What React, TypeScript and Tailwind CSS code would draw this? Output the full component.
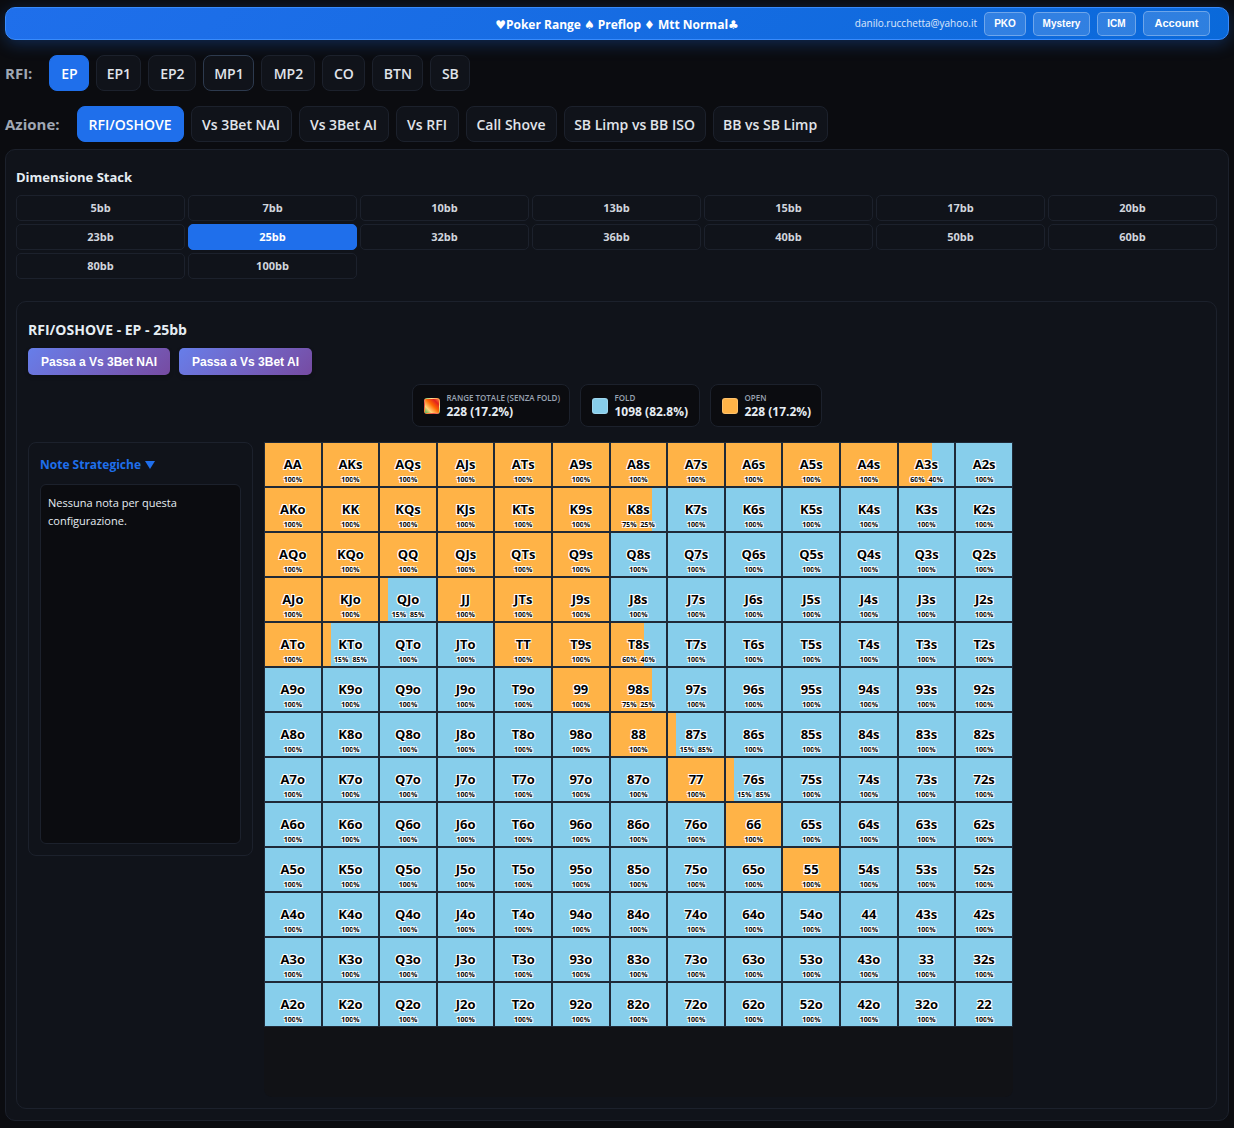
import React from "react";
import clsx from "clsx";

const RANKS = ["A", "K", "Q", "J", "T", "9", "8", "7", "6", "5", "4", "3", "2"];

const OPEN_COLOR = "#ffb347";
const FOLD_COLOR = "#87ceeb";

// open frequency for each hand, everything missing is a pure fold
const OPEN: Record<string, number> = {
  AA: 100, AKs: 100, AQs: 100, AJs: 100, ATs: 100, A9s: 100, A8s: 100,
  A7s: 100, A6s: 100, A5s: 100, A4s: 100, A3s: 60,
  AKo: 100, KK: 100, KQs: 100, KJs: 100, KTs: 100, K9s: 100, K8s: 75,
  AQo: 100, KQo: 100, QQ: 100, QJs: 100, QTs: 100, Q9s: 100,
  AJo: 100, KJo: 100, QJo: 15, JJ: 100, JTs: 100, J9s: 100,
  ATo: 100, KTo: 15, TT: 100, T9s: 100, T8s: 60,
  "99": 100, "98s": 75,
  "88": 100, "87s": 15,
  "77": 100, "76s": 15,
  "66": 100,
  "55": 100,
};

const modes = [
  { label: "PKO", width: "w-[42px]" },
  { label: "Mystery", width: "w-[57px]" },
  { label: "ICM", width: "w-[39px]" },
];

const positions = [
  { label: "EP", width: "w-[40px]" },
  { label: "EP1", width: "w-[45px]" },
  { label: "EP2", width: "w-[48px]" },
  { label: "MP1", width: "w-[51px]" },
  { label: "MP2", width: "w-[54px]" },
  { label: "CO", width: "w-[43px]" },
  { label: "BTN", width: "w-[51px]" },
  { label: "SB", width: "w-[40px]" },
];

const actions = [
  { label: "RFI/OSHOVE", width: "w-[107px]" },
  { label: "Vs 3Bet NAI", width: "w-[101px]" },
  { label: "Vs 3Bet AI", width: "w-[90px]" },
  { label: "Vs RFI", width: "w-[63px]" },
  { label: "Call Shove", width: "w-[91px]" },
  { label: "SB Limp vs BB ISO", width: "w-[142px]" },
  { label: "BB vs SB Limp", width: "w-[115px]" },
];

const stacks = [
  "5bb", "7bb", "10bb", "13bb", "15bb", "17bb", "20bb", "23bb",
  "25bb", "32bb", "36bb", "40bb", "50bb", "60bb", "80bb", "100bb",
];

const legend = [
  {
    label: "Range totale (senza fold)",
    value: "228 (17.2%)",
    width: "w-[158px]",
    swatch: "bg-[linear-gradient(45deg,#4caf50_0%,#ffd27a_25%,#ff6600_55%,#e02020_80%,#ff8a3c_100%)]",
  },
  { label: "Fold", value: "1098 (82.8%)", width: "w-[120px]", swatch: "bg-[#87ceeb]" },
  { label: "Open", value: "228 (17.2%)", width: "w-[112px]", swatch: "bg-[#ffb347]" },
];

const handName = (row: number, col: number) => {
  if (row === col) return RANKS[row] + RANKS[col];
  return row < col ? `${RANKS[row]}${RANKS[col]}s` : `${RANKS[col]}${RANKS[row]}o`;
};

const Tab = ({ label, width, active, focused }: { label: string; width: string; active: boolean; focused?: boolean }) => (
  <button
    type="button"
    className={clsx(
      "h-9 shrink-0 rounded-lg border pt-0.5 text-sm font-semibold whitespace-nowrap",
      width,
      active
        ? "border-[#1f6feb] bg-[#1f6feb] text-white"
        : "bg-[#10131a] text-[#e0e4ea]",
      !active && (focused ? "border-[#2d3a4e]" : "border-[#1c212c]")
    )}
  >
    {label}
  </button>
);

const Suit = ({ children }: { children: string }) => (
  <span className="font-['DejaVu_Sans'] text-xs">{children}</span>
);

const Header = () => (
  <header className="grid h-[33px] grid-cols-[1fr_auto_1fr] items-center rounded-[10px] border border-[#388bfd] bg-linear-135 from-[#1f6feb] to-[#0969da] px-[18px] shadow-[0_4px_16px_rgba(31,111,235,0.3)]">
    <div />
    <h1 className="flex items-center gap-[3px] pt-0.5 text-xs font-bold whitespace-nowrap text-white">
      <span className="flex items-center">
        <Suit>♥</Suit>Poker Range
      </span>
      <Suit>♠</Suit>
      <span>Preflop</span>
      <Suit>♦</Suit>
      <span className="flex items-center">
        Mtt Normal<Suit>♣</Suit>
      </span>
    </h1>
    <div className="flex items-center justify-end gap-[7px]">
      <span className="text-[10px] text-white/85">danilo.rucchetta@yahoo.it</span>
      {modes.map((mode) => (
        <button
          key={mode.label}
          type="button"
          className={clsx(
            "h-6 rounded-[5px] border border-white/30 bg-white/15 font-['Liberation_Sans'] text-[10px] font-bold text-white",
            mode.width
          )}
        >
          {mode.label}
        </button>
      ))}
      <button
        type="button"
        className="h-[25px] w-[67px] rounded-[5px] border border-white/30 bg-white/15 font-['Liberation_Sans'] text-[11px] font-bold text-white"
      >
        Account
      </button>
    </div>
  </header>
);

const HandCell = ({ hand }: { hand: string }) => {
  const open = OPEN[hand] ?? 0;
  const parts = open > 0 && open < 100 ? [open, 100 - open] : [100];
  return (
    <td
      className="h-[45px] border border-[#1f2937] p-0 text-center text-black"
      style={{
        background: `linear-gradient(to right, ${OPEN_COLOR} ${open}%, ${FOLD_COLOR} ${open}%)`,
      }}
    >
      <div className="flex flex-col items-center pt-3 [text-shadow:1px_1px_0_#fff,-1px_-1px_0_#fff,1px_-1px_0_#fff,-1px_1px_0_#fff]">
        <span className="text-[13px] leading-[18px] font-bold">{hand}</span>
        <span className="flex gap-1 pt-px text-[7px] leading-3 font-bold">
          {parts.map((part, i) => (
            <span key={i}>{part}%</span>
          ))}
        </span>
      </div>
    </td>
  );
};

const RangeMatrix = () => (
  <div className="max-w-[749px] flex-1 rounded-lg bg-[#111216] pb-[70px]">
    <table className="w-full table-fixed border-separate border-spacing-0">
      <tbody>
        {RANKS.map((rank, row) => (
          <tr key={rank}>
            {RANKS.map((_, col) => (
              <HandCell key={col} hand={handName(row, col)} />
            ))}
          </tr>
        ))}
      </tbody>
    </table>
  </div>
);

const Notes = () => (
  <aside className="w-[225px] shrink-0 rounded-lg border border-[#1c212c] p-[11px]">
    <button type="button" className="flex h-5 items-center gap-1 pt-0.5 text-xs font-bold text-[#1f6feb]">
      Note Strategiche
      <svg viewBox="0 0 10 8" className="h-2 w-[10px]" fill="currentColor">
        <path d="M0 0h10L5 8z" />
      </svg>
    </button>
    <div className="mt-[10px] h-[360px] rounded-md border border-[#1c212c] bg-[#0b0c10] px-[7px] py-[9px]">
      <p className="text-[11px] leading-[18px] text-[#e6edf3]">Nessuna nota per questa configurazione.</p>
    </div>
  </aside>
);

const App = () => {
  return (
    <div className="min-h-screen bg-[#0b0c10] px-[5px] pt-[7px] pb-[7px] font-['Open_Sans','Noto_Sans',sans-serif] text-[#e6edf3]">
      <Header />

      <nav className="mt-[15px] flex items-center gap-[7px]">
        <span className="mr-[10px] text-[15px] font-bold text-[#a0a8b4]">RFI:</span>
        {positions.map((p) => (
          <Tab key={p.label} {...p} active={p.label === "EP"} focused={p.label === "MP1"} />
        ))}
      </nav>

      <nav className="mt-[15px] flex items-center gap-[7px]">
        <span className="mr-[10px] text-[15px] font-bold text-[#a0a8b4]">Azione:</span>
        {actions.map((a) => (
          <Tab key={a.label} {...a} active={a.label === "RFI/OSHOVE"} />
        ))}
      </nav>

      <main className="mt-[7px] rounded-[10px] border border-[#1c212c] bg-[#10131a] pt-[17px] pr-[11px] pb-[11px] pl-[10px]">
        <h2 className="text-[13px] leading-5 font-bold">Dimensione Stack</h2>
        <div className="mt-2 grid grid-cols-7 gap-[3px]">
          {stacks.map((stack) => (
            <button
              key={stack}
              type="button"
              className={clsx(
                "h-[26px] rounded-[5px] border text-[11px] font-bold",
                stack === "25bb"
                  ? "border-[#1f6feb] bg-[#1f6feb] text-white"
                  : "border-[#1c212c] text-[#d0d5dd]"
              )}
            >
              {stack}
            </button>
          ))}
        </div>

        <section className="mt-[22px] rounded-[10px] border border-[#1c212c] px-[11px] pt-[18px] pb-[11px]">
          <h2 className="text-sm leading-5 font-bold">RFI/OSHOVE - EP - 25bb</h2>
          <div className="mt-2 flex gap-[9px]">
            <button
              type="button"
              className="h-[27px] w-[142px] rounded-[5px] bg-linear-135 from-[#667eea] to-[#764ba2] font-['Liberation_Sans'] text-xs font-bold text-white shadow-[0_2px_4px_rgba(0,0,0,0.2)]"
            >
              Passa a Vs 3Bet NAI
            </button>
            <button
              type="button"
              className="h-[27px] w-[133px] rounded-[5px] bg-linear-135 from-[#667eea] to-[#764ba2] font-['Liberation_Sans'] text-xs font-bold text-white shadow-[0_2px_4px_rgba(0,0,0,0.2)]"
            >
              Passa a Vs 3Bet AI
            </button>
          </div>

          <div className="mt-[9px] flex justify-center gap-[10px]">
            {legend.map((item) => (
              <div
                key={item.label}
                className={clsx(
                  "flex h-[43px] items-center gap-[7px] rounded-lg border border-[#1c212c] bg-[#0b0c10] pl-[11px]",
                  item.width
                )}
              >
                <span className={clsx("size-4 shrink-0 rounded-[3px] border border-white/20", item.swatch)} />
                <span className="flex flex-col whitespace-nowrap">
                  <span className="text-[8px] leading-3 font-semibold text-[#9aa3b2] uppercase">
                    {item.label}
                  </span>
                  <span className="text-xs leading-4 font-bold">{item.value}</span>
                </span>
              </div>
            ))}
          </div>

          <div className="mt-[15px] flex items-start gap-[11px]">
            <Notes />
            <RangeMatrix />
          </div>
        </section>
      </main>
    </div>
  );
};

export default App;
